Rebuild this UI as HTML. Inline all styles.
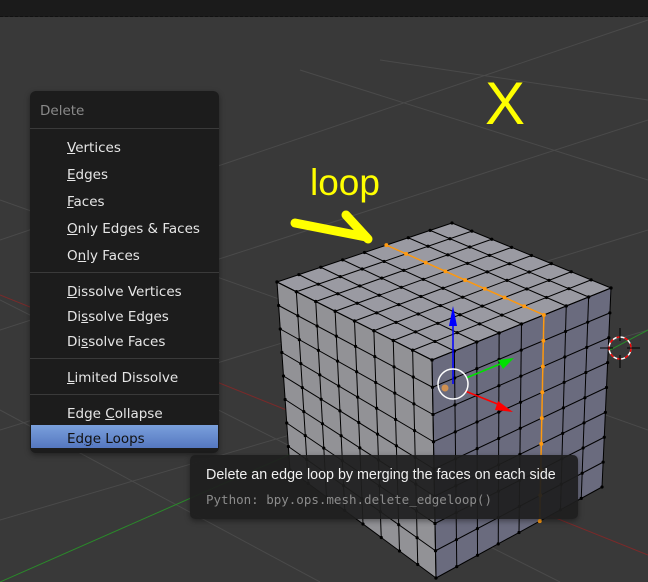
<!DOCTYPE html>
<html><head><meta charset="utf-8"><style>
body{margin:0;width:648px;height:582px;overflow:hidden;background:#393939;font-family:"DejaVu Sans","Liberation Sans",sans-serif;position:relative}
#top{position:absolute;left:0;top:0;width:648px;height:16px;background:#1b1b1b;border-bottom:1px dashed #111}
svg{position:absolute;left:0;top:0}
.menu{position:absolute;left:30px;top:91px;width:189px;height:362px;background:#1c1c1c;border-radius:6px;box-shadow:0 2px 6px rgba(0,0,0,.4);color:#e6e6e6;font-size:13.5px}
.menu .h{position:absolute;left:10px;top:12px;color:#8a8a8a}
.menu .i{position:absolute;left:37px;white-space:nowrap}
.menu .s{position:absolute;left:0;width:189px;height:1px;background:#3a3a3a}
.menu u{text-decoration:underline}
.sel{position:absolute;left:1px;top:334px;width:187px;height:23px;background:linear-gradient(#7aa0dc,#5577c0)}
.tip{position:absolute;left:190px;top:455px;width:388px;height:64px;background:rgba(30,30,30,.93);border-radius:5px;box-shadow:0 2px 6px rgba(0,0,0,.4)}
.tip .a{position:absolute;left:16px;top:12px;color:#f0f0f0;font-size:14.3px;white-space:nowrap;font-family:"Liberation Sans",sans-serif}
.tip .b{position:absolute;left:16px;top:37px;color:#8c8c8c;font-size:12.5px;white-space:nowrap;font-family:"DejaVu Sans Mono","Liberation Mono",monospace}
</style></head><body>
<div id="top"></div>
<svg id="s" width="648" height="582">
<g stroke="#4a4a4a" stroke-width="1" fill="none">
<line x1="0" y1="240" x2="648" y2="20"/><line x1="0" y1="330" x2="648" y2="120"/>
<line x1="0" y1="430" x2="648" y2="230"/><line x1="0" y1="520" x2="648" y2="330"/>
<line x1="300" y1="70" x2="648" y2="180"/><line x1="0" y1="200" x2="648" y2="430"/>
<line x1="0" y1="300" x2="560" y2="582"/><line x1="0" y1="410" x2="320" y2="582"/>
<line x1="380" y1="60" x2="648" y2="100"/>
</g>
<line x1="0" y1="582" x2="300" y2="450" stroke="#2a8a2a" stroke-width="1"/>
<line x1="0" y1="295" x2="648" y2="555" stroke="#7a2a2a" stroke-width="1"/>
<line x1="610" y1="350" x2="648" y2="330" stroke="#2a8a2a"/>
<g id="cube"></g>
<line x1="453" y1="384" x2="453" y2="318" stroke="#0000ff" stroke-width="1.5"/>
<polygon points="453,306 449,326 457,326" fill="#0000ff"/>
<line x1="466" y1="378" x2="505" y2="362" stroke="#00e000" stroke-width="1.5"/>
<polygon points="514,358 498,360 503,369" fill="#00e000"/>
<line x1="465" y1="391" x2="500" y2="405" stroke="#ff0000" stroke-width="1.5"/>
<polygon points="513,412 498,401 495,410" fill="#ff0000"/>
<circle cx="453" cy="384" r="15" fill="none" stroke="#fff" stroke-width="1.5"/>
<circle cx="445" cy="388" r="3.5" fill="#d09050"/>
<circle cx="620" cy="348" r="11" fill="none" stroke="#fff" stroke-width="1.5"/>
<circle cx="620" cy="348" r="11" fill="none" stroke="#e00" stroke-width="1.5" stroke-dasharray="4 4"/>
<line x1="600" y1="348" x2="613" y2="348" stroke="#000"/><line x1="627" y1="348" x2="640" y2="348" stroke="#000"/>
<line x1="620" y1="328" x2="620" y2="341" stroke="#000"/><line x1="620" y1="355" x2="620" y2="368" stroke="#000"/>
<text x="485" y="124" fill="#ffff00" font-family="Liberation Sans,sans-serif" font-size="60">X</text>
<text x="310" y="195" fill="#ffff00" font-family="Liberation Sans,sans-serif" font-size="37">loop</text>
<g stroke="#ffff00" stroke-width="9" stroke-linecap="round" fill="none">
<line x1="295" y1="223" x2="366" y2="237"/><line x1="346" y1="215" x2="368" y2="239"/></g>
</svg>
<div class="menu">
<div class="h">Delete</div>
<div class="s" style="top:37px"></div>
<div class="i" style="top:49px"><u>V</u>ertices</div>
<div class="i" style="top:76px"><u>E</u>dges</div>
<div class="i" style="top:103px"><u>F</u>aces</div>
<div class="i" style="top:130px"><u>O</u>nly Edges &amp; Faces</div>
<div class="i" style="top:157px">O<u>n</u>ly Faces</div>
<div class="s" style="top:181px"></div>
<div class="i" style="top:193px"><u>D</u>issolve Vertices</div>
<div class="i" style="top:218px">Di<u>s</u>solve Edges</div>
<div class="i" style="top:243px">Di<u>s</u>solve Faces</div>
<div class="s" style="top:267px"></div>
<div class="i" style="top:279px"><u>L</u>imited Dissolve</div>
<div class="s" style="top:303px"></div>
<div class="i" style="top:315px">Edge <u>C</u>ollapse</div>
<div class="sel"></div>
<div class="i" style="top:340px;color:#111">Ed<u>g</u>e Loops</div>
</div>
<div class="tip"><div class="a">Delete an edge loop by merging the faces on each side</div><div class="b">Python: bpy.ops.mesh.delete_edgeloop()</div></div>
<script>
var g=document.getElementById('cube'),NS='http://www.w3.org/2000/svg';
function el(t,a){var e=document.createElementNS(NS,t);for(var k in a)e.setAttribute(k,a[k]);g.appendChild(e);return e}
function bl(A,B,C,D,u,v){
return [A[0]*(1-u)*(1-v)+B[0]*u*(1-v)+C[0]*u*v+D[0]*(1-u)*v, A[1]*(1-u)*(1-v)+B[1]*u*(1-v)+C[1]*u*v+D[1]*(1-u)*v]}
var Bk=[452,223],L=[277,282],R=[611,288],F=[432,360],LB=[290,470],FB=[436,578],RB=[602,487];
var faces=[[Bk,L,F,R,'#9a9aa2'],[L,F,FB,LB,'#929296'],[F,R,RB,FB,'#6a6b7e']];
faces.forEach(function(f){
 el('polygon',{points:[f[0],f[1],f[2],f[3]].map(function(p){return p.join(',')}).join(' '),fill:f[4]});
});
var N=8;
faces.forEach(function(f){
 for(var i=0;i<=N;i++){
  var p1=bl(f[0],f[1],f[2],f[3],i/N,0),p2=bl(f[0],f[1],f[2],f[3],i/N,1);
  el('line',{x1:p1[0],y1:p1[1],x2:p2[0],y2:p2[1],stroke:'#000','stroke-width':1});
  p1=bl(f[0],f[1],f[2],f[3],0,i/N);p2=bl(f[0],f[1],f[2],f[3],1,i/N);
  el('line',{x1:p1[0],y1:p1[1],x2:p2[0],y2:p2[1],stroke:'#000','stroke-width':1});
  for(var j=0;j<=N;j++){var p=bl(f[0],f[1],f[2],f[3],i/N,j/N);el('circle',{cx:p[0],cy:p[1],r:1.6,fill:'#000'});}
 }
});
var u=3/8,pts=[];
for(var j=0;j<=N;j++)pts.push(bl(Bk,L,F,R,u,j/N));
for(var j=1;j<=N;j++)pts.push(bl(F,R,RB,FB,1-u,j/N));
el('polyline',{points:pts.map(function(p){return p.join(',')}).join(' '),fill:'none',stroke:'#ff9a10','stroke-width':1.5});
pts.forEach(function(p){el('circle',{cx:p[0],cy:p[1],r:2,fill:'#ff9a10'})});
</script>
</body></html>
